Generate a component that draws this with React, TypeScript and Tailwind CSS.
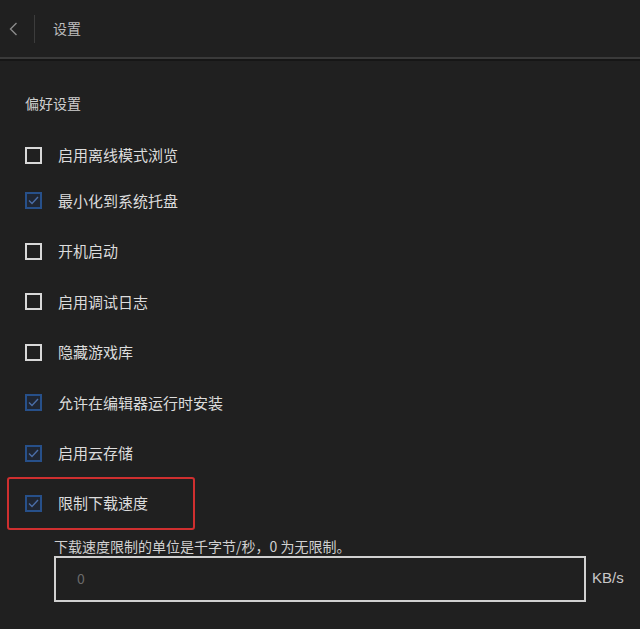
import React from "react";

const font = { fontFamily: '"Noto Sans CJK SC", "Noto Sans", sans-serif' };

const options = [
  { label: "启用离线模式浏览", checked: false },
  { label: "最小化到系统托盘", checked: true },
  { label: "开机启动", checked: false },
  { label: "启用调试日志", checked: false },
  { label: "隐藏游戏库", checked: false },
  { label: "允许在编辑器运行时安装", checked: true },
  { label: "启用云存储", checked: true },
];

const Checkbox = ({ checked }: { checked: boolean }) =>
  checked ? (
    <div className="w-[17px] h-[17px] border-2 border-[#27508a] bg-[#1f2633] flex items-center justify-center shrink-0">
      <svg width="11" height="9" viewBox="0 0 11 9" fill="none">
        <path d="M1 4.5 L4 7.5 L10 1" stroke="#4b6ea8" strokeWidth="1.4" />
      </svg>
    </div>
  ) : (
    <div className="w-[17px] h-[17px] border-2 border-[#d8d8d8] shrink-0" />
  );

const Row = ({ label, checked }: { label: string; checked: boolean }) => (
  <div className="flex items-center h-[50.5px] gap-4">
    <Checkbox checked={checked} />
    <span className="text-[15px] text-[#dcdcdc]">{label}</span>
  </div>
);

export default function App() {
  return (
    <div className="w-[640px] h-[629px] bg-[#202020] overflow-hidden" style={font}>
      <header className="h-[57px] flex items-center">
        <div className="w-[18px] flex justify-end">
          <svg width="9" height="14" viewBox="0 0 9 14" fill="none">
            <path d="M7.5 1 L1.5 7 L7.5 13" stroke="#8a8a8a" strokeWidth="1.4" />
          </svg>
        </div>
        <div className="ml-[16px] w-px h-[28px] bg-[#3c3c3c]" />
        <span className="ml-[18px] text-[14px] text-[#bdbdbd]">设置</span>
      </header>
      <div className="h-[2px] bg-[#3a3a3a]" />
      <div className="h-[2px] bg-[#161616]" />

      <main className="pl-[25px] pt-[31px]">
        <div className="text-[14px] text-[#d0d0d0] leading-[22px]">偏好设置</div>
        <div className="mt-[16px]">
          {options.map((o, i) => (
            <div key={o.label} className={i === 1 ? "-mt-[5px]" : ""}>
              <Row label={o.label} checked={o.checked} />
            </div>
          ))}
        </div>
        <div className="-ml-[18px] -mt-[2px] w-[188px] h-[53px] border-2 border-[#cf2f2f] rounded-[3px] pl-[16px] flex items-center gap-4">
          <Checkbox checked />
          <span className="text-[15px] text-[#dcdcdc]">限制下载速度</span>
        </div>
        <div className="ml-[29px] mt-[6px] text-[14px] text-[#d0d0d0] leading-[20px]">
          下载速度限制的单位是千字节/秒，0 为无限制。
        </div>
        <div className="ml-[29px] mt-0 flex items-center gap-[6px]">
          <div className="w-[532px] h-[46px] border-2 border-[#d0d0d0] flex items-center pl-[21px]">
            <span className="text-[14px] text-[#6a6a6a]">0</span>
          </div>
          <span className="text-[15px] text-[#c8c8c8]" style={{ fontFamily: '"Liberation Sans", sans-serif' }}>
            KB/s
          </span>
        </div>
      </main>
    </div>
  );
}
